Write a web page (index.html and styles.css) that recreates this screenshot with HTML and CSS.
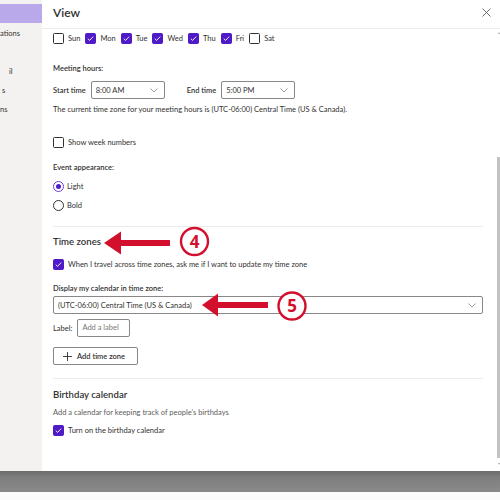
FILE: index.html
```html
<!DOCTYPE html>
<html lang="en">
<head>
<meta charset="utf-8">
<title>Calendar settings - View</title>
<link rel="stylesheet" href="styles.css">
</head>
<body>
<div class="screen">
  <div class="window">
    <nav class="sidebar">
      <div class="nav-item active"></div>
      <div class="nav-item">ations</div>
      <div class="nav-item"></div>
      <div class="nav-item frag-il">il</div>
      <div class="nav-item frag-s">s</div>
      <div class="nav-item">ns</div>
    </nav>
    <section class="panel">
      <header class="panel-header">
        <h1>View</h1>
        <button class="close" aria-label="Close">
          <svg width="9" height="9" viewBox="0 0 9 9"><path d="M0.5 0.5 L8.5 8.5 M8.5 0.5 L0.5 8.5" stroke="#605e5c" stroke-width="0.9" fill="none"/></svg>
        </button>
      </header>
      <div class="panel-body">
        <div class="content">
          <div class="days">
            <label class="check"><span class="cb"></span>Sun</label>
            <label class="check"><span class="cb on"><svg width="9" height="9" viewBox="0 0 9 9"><path d="M1.8 4.7 L3.6 6.4 L7.2 2.6" stroke="#fff" stroke-width="0.9" fill="none"/></svg></span>Mon</label>
            <label class="check"><span class="cb on"><svg width="9" height="9" viewBox="0 0 9 9"><path d="M1.8 4.7 L3.6 6.4 L7.2 2.6" stroke="#fff" stroke-width="0.9" fill="none"/></svg></span>Tue</label>
            <label class="check"><span class="cb on"><svg width="9" height="9" viewBox="0 0 9 9"><path d="M1.8 4.7 L3.6 6.4 L7.2 2.6" stroke="#fff" stroke-width="0.9" fill="none"/></svg></span>Wed</label>
            <label class="check"><span class="cb on"><svg width="9" height="9" viewBox="0 0 9 9"><path d="M1.8 4.7 L3.6 6.4 L7.2 2.6" stroke="#fff" stroke-width="0.9" fill="none"/></svg></span>Thu</label>
            <label class="check"><span class="cb on"><svg width="9" height="9" viewBox="0 0 9 9"><path d="M1.8 4.7 L3.6 6.4 L7.2 2.6" stroke="#fff" stroke-width="0.9" fill="none"/></svg></span>Fri</label>
            <label class="check"><span class="cb"></span>Sat</label>
          </div>

          <div class="field-title meeting-title">Meeting hours:</div>
          <div class="time-row">
            <div class="time-field">
              <span class="strong">Start time</span>
              <div class="select small"><span>8:00 AM</span><svg width="8" height="5" viewBox="0 0 8 5"><path d="M0.5 0.5 L4 4 L7.5 0.5" stroke="#8a8886" stroke-width="0.8" fill="none"/></svg></div>
            </div>
            <div class="time-field">
              <span class="strong">End time</span>
              <div class="select small"><span>5:00 PM</span><svg width="8" height="5" viewBox="0 0 8 5"><path d="M0.5 0.5 L4 4 L7.5 0.5" stroke="#8a8886" stroke-width="0.8" fill="none"/></svg></div>
            </div>
          </div>
          <p class="note">The current time zone for your meeting hours is (UTC-06:00) Central Time (US &amp; Canada).</p>

          <label class="check week"><span class="cb"></span>Show week numbers</label>

          <div class="field-title appearance-title">Event appearance:</div>
          <label class="radio light"><span class="rb on"></span>Light</label>
          <label class="radio bold"><span class="rb"></span>Bold</label>

          <hr class="sep sep-tz">

          <h2 class="section-title tz-title">Time zones</h2>
          <label class="check travel"><span class="cb on"><svg width="9" height="9" viewBox="0 0 9 9"><path d="M1.8 4.7 L3.6 6.4 L7.2 2.6" stroke="#fff" stroke-width="0.9" fill="none"/></svg></span>When I travel across time zones, ask me if I want to update my time zone</label>

          <div class="field-title display-title">Display my calendar in time zone:</div>
          <div class="select wide"><span>(UTC-06:00) Central Time (US &amp; Canada)</span><svg width="8" height="5" viewBox="0 0 8 5"><path d="M0.5 0.5 L4 4 L7.5 0.5" stroke="#8a8886" stroke-width="0.8" fill="none"/></svg></div>

          <div class="label-row">
            <span>Label:</span>
            <div class="text-input">Add a label</div>
          </div>

          <button class="add-btn">
            <svg width="9" height="9" viewBox="0 0 9 9"><path d="M4.5 0 V9 M0 4.5 H9" stroke="#323130" stroke-width="0.9" fill="none"/></svg>
            <span>Add time zone</span>
          </button>

          <hr class="sep sep-bd">

          <h2 class="section-title bd-title">Birthday calendar</h2>
          <p class="note bd-note">Add a calendar for keeping track of people's birthdays</p>
          <label class="check bd-check"><span class="cb on"><svg width="9" height="9" viewBox="0 0 9 9"><path d="M1.8 4.7 L3.6 6.4 L7.2 2.6" stroke="#fff" stroke-width="0.9" fill="none"/></svg></span>Turn on the birthday calendar</label>

          <svg class="callout callout-4" width="112" height="34" viewBox="0 0 112 34">
            <rect x="18" y="15" width="52" height="6" fill="#d2102d"/>
            <polygon points="4,18 21,6.5 21,29.5" fill="#d2102d"/>
            <circle cx="94.5" cy="16.5" r="13.5" fill="#fff" stroke="#d2102d" stroke-width="2.4"/>
            <text x="94.5" y="22.6" text-anchor="middle" class="callout-num">4</text>
          </svg>
          <svg class="callout callout-5" width="112" height="34" viewBox="0 0 112 34">
            <rect x="18" y="13" width="52" height="6" fill="#d2102d"/>
            <polygon points="4,16 20,4.5 20,27.5" fill="#d2102d"/>
            <circle cx="94" cy="17" r="13.5" fill="#fff" stroke="#d2102d" stroke-width="2.4"/>
            <text x="94" y="23.1" text-anchor="middle" class="callout-num">5</text>
          </svg>
        </div>
        <div class="scrollbar">
          <span class="sb-up"></span>
          <span class="sb-thumb"></span>
          <span class="sb-down"></span>
        </div>
      </div>
    </section>
  </div>
  <div class="taskbar"></div>
  <div class="bottom-strip"></div>
</div>
</body>
</html>
```

FILE: styles.css
```css
* { box-sizing: border-box; }

html, body {
  margin: 0;
  padding: 0;
}

body {
  width: 500px;
  height: 500px;
  overflow: hidden;
  font-family: "Lato", "Liberation Sans", sans-serif;
  font-size: 7.5px;
  color: #323130;
  background: #fbfbfb;
}

.screen {
  display: flex;
  flex-direction: column;
  height: 500px;
}

.window {
  display: flex;
  height: 471px;
  flex: none;
}

/* sidebar */
.sidebar {
  width: 42px;
  flex: none;
  background: #f3f2f1;
  overflow: hidden;
  padding-top: 4px;
}

.nav-item {
  height: 19px;
  line-height: 21px;
  white-space: nowrap;
  color: #323130;
}

.nav-item.active { background: #b9a8ea; }
.frag-il { padding-left: 9px; }
.frag-s { padding-left: 2px; }

/* panel */
.panel {
  flex: 1;
  min-width: 0;
  background: #fff;
  display: flex;
  flex-direction: column;
}

.panel-header {
  height: 29px;
  flex: none;
  border-bottom: 1px solid #edebe9;
  display: flex;
  align-items: center;
  justify-content: space-between;
  padding: 0 9px 4px 11px;
}

.panel-header h1 {
  margin: 0;
  font-size: 12px;
  font-weight: 600;
  color: #323130;
}

.close {
  border: 0;
  background: none;
  padding: 0;
  width: 10px;
  height: 10px;
  display: flex;
  align-items: center;
  justify-content: center;
}

.panel-body {
  flex: 1;
  min-height: 0;
  display: flex;
}

.content {
  flex: 1;
  position: relative;
  overflow: hidden;
  padding: 4px 13px 0 11px;
}

/* checkboxes */
.check {
  display: flex;
  align-items: center;
  gap: 4px;
  height: 11px;
  line-height: 11px;
  white-space: nowrap;
}

.cb {
  width: 11px;
  height: 11px;
  flex: none;
  border: 1px solid #323130;
  border-radius: 1.5px;
  display: flex;
  align-items: center;
  justify-content: center;
}

.cb.on {
  background: #4f1bc9;
  border-color: #4f1bc9;
}

.days {
  display: flex;
  gap: 5px;
}

/* text blocks */
.field-title {
  font-weight: 600;
  line-height: 12px;
  height: 12px;
}

.strong { font-weight: 600; }

.meeting-title { margin-top: 19px; }
.appearance-title { margin-top: 14px; }
.display-title { margin-top: 13px; }

.time-row {
  margin-top: 6px;
  display: flex;
  gap: 22px;
  height: 18px;
}

.time-field {
  display: flex;
  align-items: center;
  gap: 5px;
}

.select {
  height: 18px;
  border: 1px solid #8a8886;
  border-radius: 2px;
  display: flex;
  align-items: center;
  justify-content: space-between;
  padding: 0 6px 0 4px;
  color: #323130;
}

.select.small { width: 74px; }

.select.wide {
  margin-top: 1px;
  width: 430px;
}

.note {
  margin: 5px 0 0;
  line-height: 12px;
  height: 12px;
  white-space: nowrap;
  color: #323130;
}

.check.week { margin-top: 21px; }

/* radios */
.radio {
  display: flex;
  align-items: center;
  gap: 3px;
  height: 12px;
}

.radio.light { margin-top: 6px; }
.radio.bold { margin-top: 7px; }

.rb {
  width: 11px;
  height: 11px;
  flex: none;
  border: 1px solid #323130;
  border-radius: 50%;
  display: flex;
  align-items: center;
  justify-content: center;
}

.rb.on { border-color: #6b3fd9; }

.rb.on::after {
  content: "";
  width: 5px;
  height: 5px;
  border-radius: 50%;
  background: #4f1bc9;
}

/* separators and sections */
.sep {
  margin: 0;
  border: 0;
  height: 1px;
  background: #edebe9;
}

.sep-tz { margin-top: 15px; }
.sep-bd { margin-top: 13px; }

.section-title {
  margin: 0;
  font-size: 9.6px;
  font-weight: 600;
  line-height: 14px;
  height: 14px;
}

.tz-title { margin-top: 8px; }
.bd-title { margin-top: 9px; }

.check.travel { margin-top: 10px; }

.label-row {
  margin-top: 5px;
  display: flex;
  align-items: center;
  gap: 5px;
  height: 18px;
}

.text-input {
  width: 53px;
  height: 18px;
  border: 1px solid #8a8886;
  border-radius: 2px;
  padding-left: 4px;
  line-height: 16px;
  color: #797775;
}

.add-btn {
  margin-top: 10px;
  width: 85px;
  height: 18px;
  border: 1px solid #8a8886;
  border-radius: 2px;
  background: #fff;
  display: flex;
  align-items: center;
  gap: 5px;
  padding: 0 0 0 9px;
  font: inherit;
  font-weight: 600;
  color: #323130;
}

.bd-note {
  color: #605e5c;
  margin-top: 5px;
}

.check.bd-check { margin-top: 6px; }

/* annotation callouts */
.callout { position: absolute; }
.callout-4 { left: 58px; top: 196px; }
.callout-5 { left: 156px; top: 260px; }

.callout-num {
  font-family: "Open Sans", "Liberation Sans", sans-serif;
  font-size: 17px;
  font-weight: 700;
  fill: #d2102d;
}

/* scrollbar */
.scrollbar {
  width: 4px;
  flex: none;
  display: flex;
  flex-direction: column;
  align-items: flex-end;
}

.sb-up {
  margin-top: 3px;
  width: 0;
  height: 0;
  border-left: 1.5px solid transparent;
  border-right: 1.5px solid transparent;
  border-bottom: 2px solid #a6a6a6;
}

.sb-thumb {
  margin-top: 123px;
  width: 3px;
  height: 301px;
  background: #c2c2c2;
}

.sb-down {
  margin-top: 5px;
  width: 0;
  height: 0;
  border-left: 1.5px solid transparent;
  border-right: 1.5px solid transparent;
  border-top: 2px solid #a6a6a6;
}

/* bottom */
.taskbar {
  height: 21px;
  flex: none;
  background: linear-gradient(#6c6c6c, #7e7e7e 30%, #8a8a8a);
}

.bottom-strip {
  flex: 1;
  background: #fbfbfb;
}
```
